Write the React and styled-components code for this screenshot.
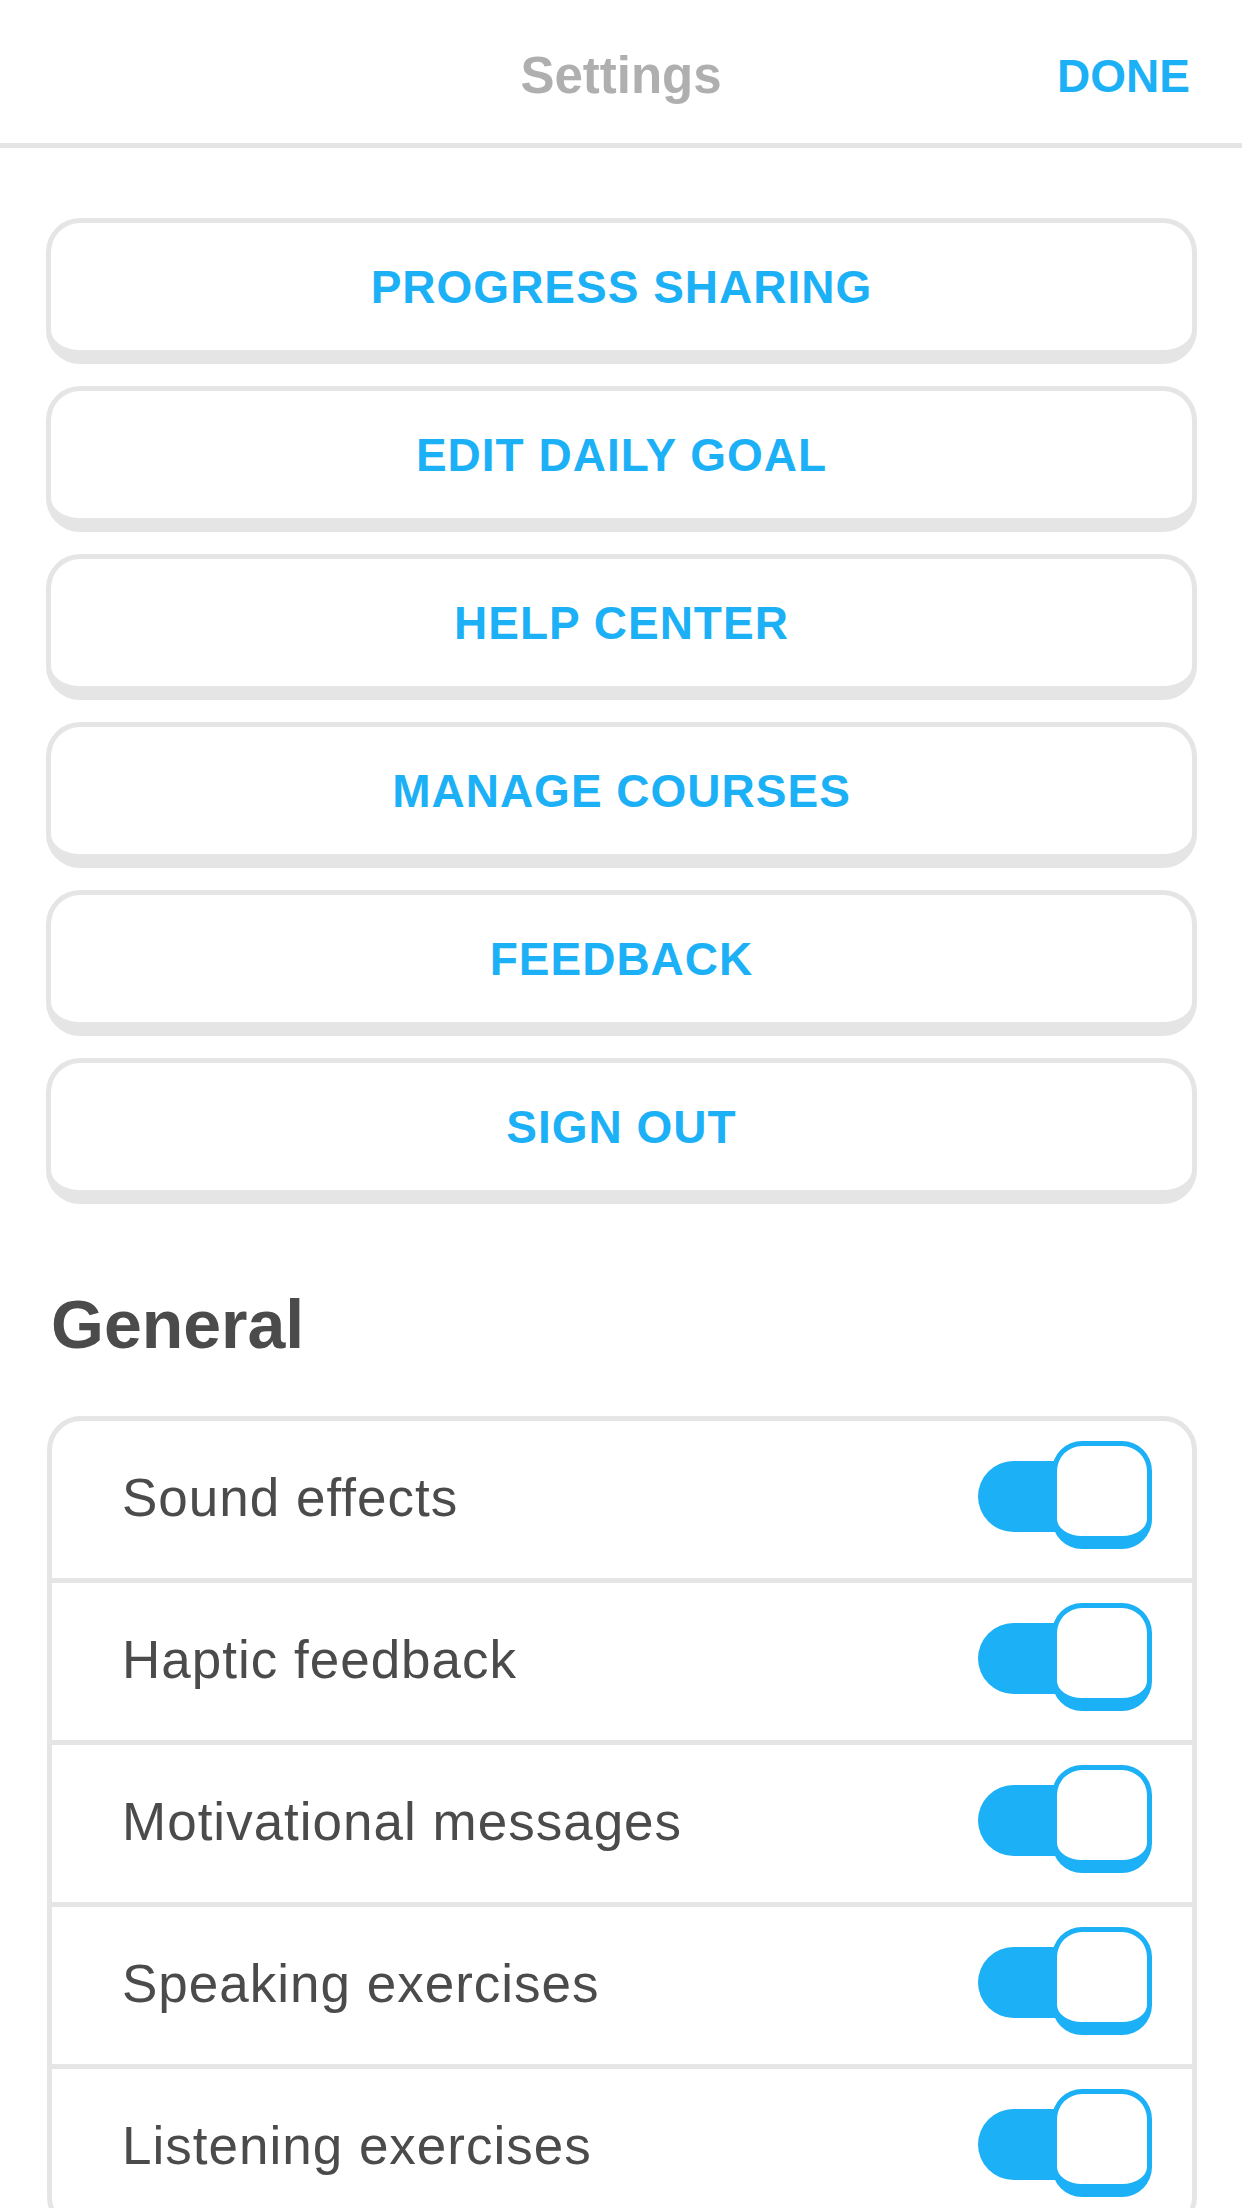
import React, {useState} from 'react'
import styled, {createGlobalStyle} from 'styled-components';

const GlobalStyle = createGlobalStyle`
  html, body {
    margin: 0;
    padding: 0;
    background: #ffffff;
  }
  body {
    font-family: "Liberation Sans", Arial, sans-serif;
    -webkit-font-smoothing: antialiased;
  }
`;

const actions = [
    'PROGRESS SHARING',
    'EDIT DAILY GOAL',
    'HELP CENTER',
    'MANAGE COURSES',
    'FEEDBACK',
    'SIGN OUT',
];

const generalItems = [
    'Sound effects',
    'Haptic feedback',
    'Motivational messages',
    'Speaking exercises',
    'Listening exercises',
];

function Toggle({on, onClick}) {
    return (
        <ToggleWrap onClick={onClick} role="switch" aria-checked={on}>
            <Track on={on ? 1 : 0}/>
            <Knob on={on ? 1 : 0}/>
        </ToggleWrap>
    )
}

function App() {
    const [toggles, setToggles] = useState(generalItems.map(() => true));

    const flip = (i) => {
        setToggles(prev => prev.map((v, idx) => idx === i ? !v : v));
    };

    return (
        <Page>
            <GlobalStyle/>
            <Header>
                <span/>
                <Title>Settings</Title>
                <DoneButton>DONE</DoneButton>
            </Header>

            <Content>
                <ButtonList>
                    {actions.map(label => (
                        <ActionButton key={label}>{label}</ActionButton>
                    ))}
                </ButtonList>

                <SectionTitle>General</SectionTitle>

                <Card>
                    {generalItems.map((item, i) => (
                        <Row key={item} last={i === generalItems.length - 1}>
                            <RowLabel>{item}</RowLabel>
                            <Toggle on={toggles[i]} onClick={() => flip(i)}/>
                        </Row>
                    ))}
                </Card>
            </Content>
        </Page>
    )
}

export default App

const Page = styled.div`
  width: 1242px;
  min-height: 2208px;
  background: #fff;
`;

const Header = styled.div`
  box-sizing: border-box;
  height: 148px;
  padding: 8px 52px 0;
  display: grid;
  grid-template-columns: 1fr auto 1fr;
  align-items: center;
  border-bottom: 5px solid #e5e5e5;
`;

const Title = styled.div`
  font-size: 51px;
  font-weight: 700;
  color: #afafaf;
  line-height: 1;
`;

const DoneButton = styled.div`
  justify-self: end;
  font-size: 46px;
  font-weight: 700;
  color: #1cb0f6;
  line-height: 1;
  cursor: pointer;
`;

const Content = styled.div`
  padding: 70px 45px 0 46px;
`;

const ButtonList = styled.div`
  display: flex;
  flex-direction: column;
  gap: 22px;
`;

const ActionButton = styled.div`
  box-sizing: border-box;
  height: 146px;
  display: flex;
  align-items: center;
  justify-content: center;
  border: 5px solid #e5e5e5;
  border-bottom-width: 14px;
  border-radius: 34px;
  background: #fff;
  color: #1cb0f6;
  font-size: 46px;
  font-weight: 700;
  letter-spacing: 1px;
  line-height: 1;
  cursor: pointer;
`;

const SectionTitle = styled.h2`
  margin: 80px 0 52px 5px;
  font-size: 68px;
  font-weight: 700;
  line-height: 80px;
  color: #4b4b4b;
`;

const Card = styled.div`
  border: 5px solid #e5e5e5;
  border-radius: 34px;
  overflow: hidden;
  margin-left: 1px;
`;

const Row = styled.div`
  height: 157px;
  display: flex;
  align-items: center;
  justify-content: space-between;
  padding: 0 40px 0 70px;
  border-bottom: ${props => props.last ? 'none' : '5px solid #e5e5e5'};
`;

const RowLabel = styled.div`
  font-size: 53px;
  letter-spacing: 1px;
  color: #4b4b4b;
  line-height: 1;
  margin-top: -4px;
`;

const ToggleWrap = styled.div`
  display: flex;
  align-items: center;
  cursor: pointer;
  margin-top: -6px;
`;

const Track = styled.div`
  width: 124px;
  height: 71px;
  border-radius: 36px;
  background: ${props => props.on ? '#1cb0f6' : '#e5e5e5'};
`;

const Knob = styled.div`
  box-sizing: border-box;
  width: 100px;
  height: 108px;
  margin-left: -50px;
  margin-top: -4px;
  border: 5px solid ${props => props.on ? '#1cb0f6' : '#e5e5e5'};
  border-bottom-width: 13px;
  border-radius: 30px;
  background: #fff;
`;
